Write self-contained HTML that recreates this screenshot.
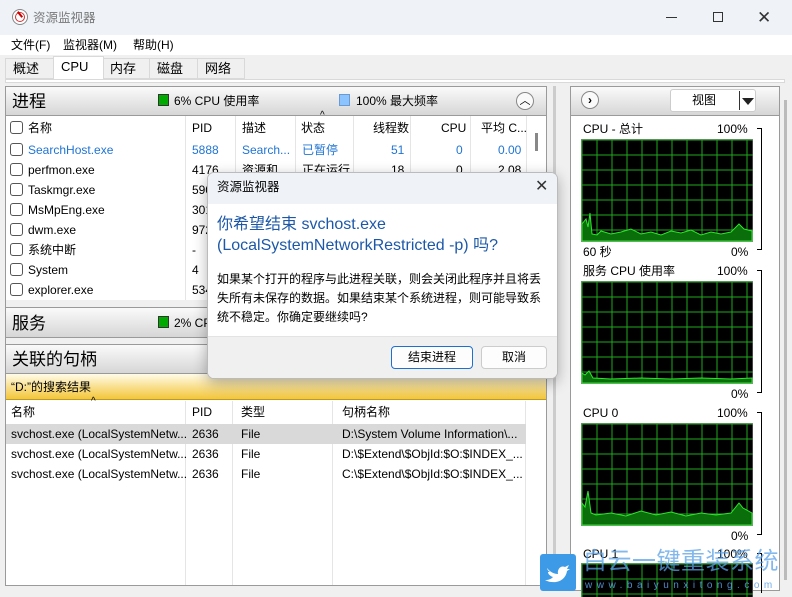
<!DOCTYPE html>
<html><head><meta charset="utf-8"><style>
*{margin:0;padding:0;box-sizing:border-box}
body{width:792px;height:597px;overflow:hidden;background:#f0f0f0;font-family:"Liberation Sans","Noto Sans CJK SC",sans-serif;font-size:12px;color:#000;position:relative}
.a{position:absolute;white-space:nowrap;line-height:17px}
.hdr{position:absolute;background:linear-gradient(#fafafa,#d6d6d6);border:1px solid #9a9a9a}
.cb{position:absolute;width:13px;height:13px;border:1px solid #555;border-radius:3px;background:#fff}
.sep{position:absolute;width:1px;background:#e5e5e5}
.blue{color:#1f74d4}
.big{font-size:17px;line-height:25px}
.tab{font-size:13px;line-height:18px}
</style></head><body>
<!-- title bar -->
<div class="a" style="left:0;top:0;width:792px;height:35px;background:#eff3f8"></div>
<div class="a" style="left:12px;top:9px;width:16px;height:16px;border-radius:50%;border:1px solid #888;background:#fff"></div>
<div class="a" style="left:15px;top:12px;width:10px;height:10px;border-radius:50%;background:#fff;border:1px solid #c33"></div>
<div class="a" style="left:19px;top:11px;width:2px;height:7px;background:#c00;transform:rotate(-40deg)"></div>
<div class="a" style="left:33px;top:10px;font-size:12.5px;color:#777">资源监视器</div>
<div class="a" style="left:666px;top:17px;width:11px;height:1px;background:#333"></div>
<div class="a" style="left:713px;top:12px;width:10px;height:10px;border:1px solid #333"></div>
<div class="a" style="left:757px;top:9px;font-size:17px;line-height:17px;color:#333">✕</div>
<!-- menu -->
<div class="a" style="left:0;top:35px;width:792px;height:20px;background:#fff"></div>
<div class="a" style="left:11px;top:37px">文件(F)</div>
<div class="a" style="left:63px;top:37px">监视器(M)</div>
<div class="a" style="left:133px;top:37px">帮助(H)</div>
<!-- tabs -->
<div class="a" style="left:5px;top:58px;width:240px;height:21px;border:1px solid #d9d9d9;background:#f0f0f0"></div>
<div class="a tab" style="left:13px;top:60px">概述</div>
<div class="a" style="left:53px;top:56px;width:51px;height:24px;background:#fff;border:1px solid #d9d9d9;border-bottom:none"></div>
<div class="a tab" style="left:61px;top:58px">CPU</div>
<div class="a" style="left:149px;top:58px;width:1px;height:21px;background:#d9d9d9"></div>
<div class="a" style="left:197px;top:58px;width:1px;height:21px;background:#d9d9d9"></div>
<div class="a tab" style="left:110px;top:60px">内存</div>
<div class="a tab" style="left:157px;top:60px">磁盘</div>
<div class="a tab" style="left:205px;top:60px">网络</div>
<div class="a" style="left:5px;top:79px;width:780px;height:4px;border:1px solid #d9d9d9;background:#fff"></div>

<!-- left panel -->
<div class="a" style="left:5px;top:86px;width:542px;height:500px;border:1px solid #9a9a9a;background:#fff"></div>
<div class="hdr" style="left:5px;top:86px;width:542px;height:30px"></div>
<div class="a big" style="left:12px;top:89px">进程</div>
<div class="a" style="left:158px;top:94px;width:11px;height:12px;background:#0a0;border:1px solid #333"></div>
<div class="a" style="left:174px;top:93px">6% CPU 使用率</div>
<div class="a" style="left:339px;top:94px;width:11px;height:12px;background:#8cc4ff;border:1px solid #6a9ad0"></div>
<div class="a" style="left:356px;top:93px">100% 最大频率</div>
<div class="a" style="left:516px;top:92px;width:18px;height:18px;border-radius:50%;border:1px solid #888;background:#fafafa;font-size:11px;text-align:center;line-height:16px">︿</div>
<!-- process table -->
<div class="sep" style="left:185px;top:116px;height:184px"></div>
<div class="sep" style="left:235px;top:116px;height:184px"></div>
<div class="sep" style="left:295px;top:116px;height:184px"></div>
<div class="sep" style="left:353px;top:116px;height:184px"></div>
<div class="sep" style="left:410px;top:116px;height:184px"></div>
<div class="sep" style="left:470px;top:116px;height:184px"></div>
<div class="sep" style="left:526px;top:116px;height:184px"></div>
<div class="a" style="left:535px;top:133px;width:3px;height:18px;background:#888"></div>
<div class="a" style="left:320px;top:111px;font-size:10px;line-height:10px">^</div>
<div class="cb" style="left:10px;top:121px"></div>
<div class="a" style="left:28px;top:120px">名称</div>
<div class="a" style="left:192px;top:120px">PID</div>
<div class="a" style="left:242px;top:120px">描述</div>
<div class="a" style="left:301px;top:120px">状态</div>
<div class="a" style="left:373px;top:120px">线程数</div>
<div class="a" style="left:441px;top:120px">CPU</div>
<div class="a" style="left:481px;top:120px">平均 C...</div>
<div class="cb" style="left:10px;top:143px"></div><div class="a blue" style="left:28px;top:142px">SearchHost.exe</div><div class="a blue" style="left:192px;top:142px">5888</div><div class="a blue" style="left:242px;top:142px">Search...</div><div class="a blue" style="left:302px;top:142px">已暂停</div><div class="a blue" style="left:391px;top:142px">51</div><div class="a blue" style="left:456px;top:142px">0</div><div class="a blue" style="left:498px;top:142px">0.00</div>
<div class="cb" style="left:10px;top:163px"></div><div class="a" style="left:28px;top:162px">perfmon.exe</div><div class="a" style="left:192px;top:162px">4176</div><div class="a" style="left:242px;top:162px">资源和</div><div class="a" style="left:302px;top:162px">正在运行</div><div class="a" style="left:391px;top:162px">18</div><div class="a" style="left:456px;top:162px">0</div><div class="a" style="left:498px;top:162px">2.08</div>
<div class="cb" style="left:10px;top:183px"></div><div class="a" style="left:28px;top:182px">Taskmgr.exe</div><div class="a" style="left:192px;top:182px">590</div>
<div class="cb" style="left:10px;top:203px"></div><div class="a" style="left:28px;top:202px">MsMpEng.exe</div><div class="a" style="left:192px;top:202px">301</div>
<div class="cb" style="left:10px;top:223px"></div><div class="a" style="left:28px;top:222px">dwm.exe</div><div class="a" style="left:192px;top:222px">972</div>
<div class="cb" style="left:10px;top:243px"></div><div class="a" style="left:28px;top:242px">系统中断</div><div class="a" style="left:192px;top:242px">-</div>
<div class="cb" style="left:10px;top:263px"></div><div class="a" style="left:28px;top:262px">System</div><div class="a" style="left:192px;top:262px">4</div>
<div class="cb" style="left:10px;top:283px"></div><div class="a" style="left:28px;top:282px">explorer.exe</div><div class="a" style="left:192px;top:282px">534</div>
<div class="a" style="left:5px;top:300px;width:542px;height:7px;background:#f0f0f0;border-left:1px solid #9a9a9a;border-right:1px solid #9a9a9a"></div>
<div class="hdr" style="left:5px;top:307px;width:542px;height:31px"></div>
<div class="a big" style="left:12px;top:311px">服务</div>
<div class="a" style="left:158px;top:316px;width:11px;height:12px;background:#0a0;border:1px solid #333"></div>
<div class="a" style="left:174px;top:315px">2% CPU</div>
<div class="a" style="left:5px;top:338px;width:542px;height:6px;background:#f0f0f0;border-left:1px solid #9a9a9a;border-right:1px solid #9a9a9a"></div>
<div class="hdr" style="left:5px;top:344px;width:542px;height:30px"></div>
<div class="a big" style="left:12px;top:347px">关联的句柄</div>
<div class="a" style="left:6px;top:374px;width:540px;height:26px;background:linear-gradient(#fffbe8,#f3c63a);border-bottom:1px solid #c09a20"></div>
<div class="a" style="left:11px;top:379px">“D:”的搜索结果</div>
<div class="a" style="left:91px;top:397px;font-size:10px;line-height:10px">^</div>
<div class="sep" style="left:185px;top:401px;height:184px"></div>
<div class="sep" style="left:232px;top:401px;height:184px"></div>
<div class="sep" style="left:332px;top:401px;height:184px"></div>
<div class="sep" style="left:525px;top:401px;height:184px"></div>
<div class="a" style="left:11px;top:404px">名称</div><div class="a" style="left:192px;top:404px">PID</div><div class="a" style="left:241px;top:404px">类型</div><div class="a" style="left:342px;top:404px">句柄名称</div>
<div class="a" style="left:6px;top:424px;width:520px;height:20px;background:#d9d9d9"></div>
<div class="a" style="left:11px;top:426px">svchost.exe (LocalSystemNetw...</div><div class="a" style="left:192px;top:426px">2636</div><div class="a" style="left:241px;top:426px">File</div><div class="a" style="left:342px;top:426px">D:\System Volume Information\...</div>
<div class="a" style="left:11px;top:446px">svchost.exe (LocalSystemNetw...</div><div class="a" style="left:192px;top:446px">2636</div><div class="a" style="left:241px;top:446px">File</div><div class="a" style="left:342px;top:446px">D:\$Extend\$ObjId:$O:$INDEX_...</div>
<div class="a" style="left:11px;top:466px">svchost.exe (LocalSystemNetw...</div><div class="a" style="left:192px;top:466px">2636</div><div class="a" style="left:241px;top:466px">File</div><div class="a" style="left:342px;top:466px">C:\$Extend\$ObjId:$O:$INDEX_...</div>
<div class="a" style="left:553px;top:86px;width:3px;height:500px;background:#ccc"></div>

<!-- right panel -->
<div class="a" style="left:570px;top:86px;width:210px;height:505px;border:1px solid #9a9a9a;background:#fff"></div>
<div class="hdr" style="left:570px;top:86px;width:210px;height:30px"></div>
<div class="a" style="left:581px;top:91px;width:18px;height:18px;border-radius:50%;border:1px solid #888;background:#fafafa;font-size:12px;text-align:center;line-height:16px;font-weight:bold">›</div>
<div class="a" style="left:670px;top:89px;width:86px;height:23px;border:1px solid #ccc;border-radius:3px;background:#fff"></div>
<div class="a" style="left:692px;top:92px">视图</div>
<div class="a" style="left:739px;top:91px;width:1px;height:19px;background:#333"></div>
<div class="a" style="left:742px;top:98px;width:0;height:0;border-left:6px solid transparent;border-right:6px solid transparent;border-top:7px solid #222"></div>
<div class="a" style="left:784px;top:100px;width:3px;height:480px;background:#bbb"></div>

<div class="a" style="left:583px;top:121px">CPU - 总计</div><div class="a" style="left:717px;top:121px">100%</div>
<div class="a" style="left:583px;top:244px">60 秒</div><div class="a" style="left:731px;top:244px">0%</div>
<div class="a" style="left:757px;top:128px;width:5px;height:122px;border:1px solid #000;border-left:none"></div>
<div class="a" style="left:583px;top:263px">服务 CPU 使用率</div><div class="a" style="left:717px;top:263px">100%</div>
<div class="a" style="left:731px;top:386px">0%</div>
<div class="a" style="left:757px;top:270px;width:5px;height:123px;border:1px solid #000;border-left:none"></div>
<div class="a" style="left:583px;top:405px">CPU 0</div><div class="a" style="left:717px;top:405px">100%</div>
<div class="a" style="left:731px;top:528px">0%</div>
<div class="a" style="left:757px;top:412px;width:5px;height:123px;border:1px solid #000;border-left:none"></div>
<div class="a" style="left:583px;top:546px">CPU 1</div><div class="a" style="left:717px;top:546px">100%</div>
<div class="a" style="left:757px;top:553px;width:5px;height:40px;border:1px solid #000;border-left:none;border-bottom:none"></div>

<svg class="a" style="left:581px;top:139px" width="172" height="103"><defs><pattern id="g" width="15" height="15" patternUnits="userSpaceOnUse"><rect width="15" height="15" fill="#000"/><path d="M1 0V15M0 1H15" stroke="#1fa81f" stroke-width="1"/></pattern></defs><rect x="0" y="0" width="172" height="103" fill="url(#g)" stroke="#888"/><path d="M1 102V85L5 80L7 88L9 74L11 95L16 96L20 92L30 95L40 93L50 90L60 95L70 93L80 96L90 92L100 94L110 91L120 96L130 93L140 95L150 93L158 85L163 90L171 92V102Z" fill="#0a6e0a" stroke="#2ee52e"/></svg>
<svg class="a" style="left:581px;top:281px" width="172" height="103"><rect x="0" y="0" width="172" height="103" fill="url(#g)" stroke="#888"/><path d="M1 102V92L4 94L8 90L12 97L30 98L60 97L90 98L120 97L150 98L171 97V102Z" fill="#0a6e0a" stroke="#2ee52e"/></svg>
<svg class="a" style="left:581px;top:423px" width="172" height="103"><rect x="0" y="0" width="172" height="103" fill="url(#g)" stroke="#888"/><path d="M1 102V80L4 84L7 68L10 90L15 92L30 90L45 93L60 88L75 92L90 89L105 93L120 90L135 92L150 90L158 80L162 85L171 90V102Z" fill="#0a6e0a" stroke="#2ee52e"/></svg>
<svg class="a" style="left:581px;top:563px" width="172" height="34"><rect x="0" y="0" width="172" height="40" fill="url(#g)" stroke="#888"/></svg>

<!-- dialog -->
<div class="a" style="left:207px;top:172px;width:351px;height:207px;background:#fff;border:1px solid #bbb;border-radius:7px;box-shadow:0 4px 14px rgba(0,0,0,.3);overflow:hidden">
  <div class="a" style="left:0;top:0;width:351px;height:31px;background:#eff3f8"></div>
  <div class="a" style="left:9px;top:6px;font-size:12.5px">资源监视器</div>
  <div class="a" style="left:327px;top:6px;font-size:16px;line-height:16px;color:#333">✕</div>
  <div class="a" style="left:9px;top:41px;font-size:16px;color:#1d58a8;line-height:21px">你希望结束 svchost.exe<br>(LocalSystemNetworkRestricted -p) 吗?</div>
  <div class="a" style="left:9px;top:97px;font-size:12px;line-height:19px">如果某个打开的程序与此进程关联，则会关闭此程序并且将丢<br>失所有未保存的数据。如果结束某个系统进程，则可能导致系<br>统不稳定。你确定要继续吗?</div>
  <div class="a" style="left:0;top:163px;width:351px;height:44px;background:#f0f0f0;border-top:1px solid #e3e3e3"></div>
  <div class="a" style="left:183px;top:173px;width:82px;height:23px;border:1px solid #1d6fd0;border-radius:4px;background:#fdfdfd;text-align:center;line-height:21px">结束进程</div>
  <div class="a" style="left:273px;top:173px;width:66px;height:23px;border:1px solid #ccc;border-radius:4px;background:#fdfdfd;text-align:center;line-height:21px">取消</div>
</div>

<!-- watermark -->
<div class="a" style="left:540px;top:554px;width:36px;height:37px;background:#3d9ae6;border-radius:3px"></div>
<svg class="a" style="left:544px;top:560px" width="28" height="26"><path d="M3 8C6 12 10 14 14 14C13 9 17 5 21 7L25 5L23 9L26 9L23 11C22 18 16 23 8 22C5 22 3 21 1 20C5 20 7 19 9 17C6 16 4 14 4 12L6 12C4 11 3 9 3 8Z" fill="#fff"/></svg>
<div class="a" style="left:583px;top:547px;font-size:24px;line-height:30px;color:rgba(90,160,230,.75);letter-spacing:0.5px">白云一键重装系统</div>
<div class="a" style="left:585px;top:580px;font-size:10px;line-height:12px;color:rgba(90,160,230,.85);letter-spacing:4.5px">www.baiyunxitong.com</div>
</body></html>
